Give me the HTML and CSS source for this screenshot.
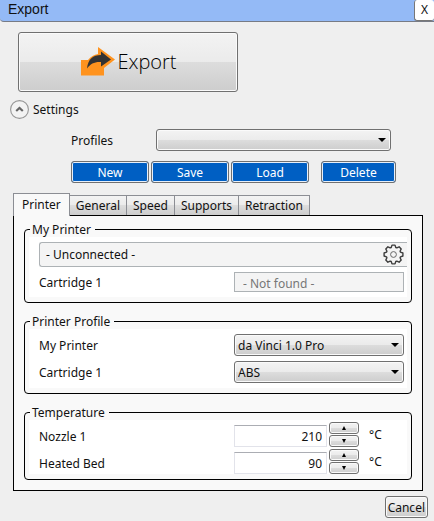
FILE: index.html
```html
<!DOCTYPE html>
<html lang="en">
<head>
<meta charset="utf-8">
<meta name="viewport" content="width=device-width, initial-scale=1">
<title>Export</title>
<link rel="stylesheet" href="styles.css">
</head>
<body>
<header class="titlebar">
  <h1 class="title">Export</h1>
  <button class="close" type="button">X</button>
</header>
<main class="content">
  <button class="export" type="button">
    <svg class="export-icon" width="34" height="32" viewBox="0 0 34 32" aria-hidden="true">
      <path d="M0 14H7Q11 9 17 8V1L34 13.500 23 22V29.500H0Z" fill="#ff931e"/>
      <path d="M6 22.500C7 13 12 9 20 9V5.500L30 13.500 20 20.500V16C14 15.500 9.500 17.500 6 22.500Z" fill="#333"/>
    </svg>
    <span>Export</span>
  </button>
  <button class="settings" type="button">
    <svg width="19" height="19" viewBox="0 0 19 19" aria-hidden="true">
      <circle cx="9.500" cy="9.500" r="8.900" fill="#f3f3f3" stroke="#969696" stroke-width="1.100"/>
      <path d="M6.200 11 9.500 8 12.800 11" fill="none" stroke="#666" stroke-width="2.200"/>
    </svg>
    <span>Settings</span>
  </button>
  <section class="profiles">
    <div class="profile-row">
      <label for="profile">Profiles</label>
      <span class="select"><select id="profile"><option></option></select></span>
    </div>
    <div class="profile-actions">
      <button class="action" type="button">New</button>
      <button class="action" type="button">Save</button>
      <button class="action" type="button">Load</button>
      <button class="action delete" type="button">Delete</button>
    </div>
  </section>
  <div class="tabs" role="tablist">
    <button class="tab active" type="button" role="tab" aria-selected="true">Printer</button>
    <button class="tab" type="button" role="tab">General</button>
    <button class="tab" type="button" role="tab">Speed</button>
    <button class="tab" type="button" role="tab">Supports</button>
    <button class="tab" type="button" role="tab">Retraction</button>
  </div>
  <div class="panel" role="tabpanel">
    <fieldset class="group">
      <legend>My Printer</legend>
      <div class="rows">
        <div class="connection">
          <span>- Unconnected -</span>
          <button class="gear" type="button">
            <svg width="21" height="21" viewBox="-10.500 -10.500 21 21" fill="none" stroke="#3c3c3c" stroke-width="1.400" stroke-linejoin="round" aria-hidden="true">
              <path d="M-2.300-7-1.500-9.400H1.500L2.300-7 3.300-6.600 5.600-7.700 7.700-5.600 6.600-3.300 7-2.300 9.400-1.500V1.500L7 2.300 6.600 3.300 7.700 5.600 5.600 7.700 3.300 6.600 2.300 7 1.500 9.400H-1.500L-2.300 7-3.300 6.600-5.600 7.700-7.700 5.600-6.600 3.300-7 2.300-9.400 1.500V-1.500L-7-2.300-6.600-3.300-7.700-5.600-5.600-7.700-3.300-6.600Z"/>
              <circle r="2.900" stroke="#666" stroke-width="1"/>
            </svg>
          </button>
        </div>
        <div class="row">
          <label for="status">Cartridge 1</label>
          <input class="status" id="status" type="text" value="- Not found -" disabled>
        </div>
      </div>
    </fieldset>
    <fieldset class="group">
      <legend>Printer Profile</legend>
      <div class="rows">
        <div class="row">
          <label for="printer">My Printer</label>
          <span class="select"><select id="printer"><option>da Vinci 1.0 Pro</option></select></span>
        </div>
        <div class="row">
          <label for="material">Cartridge 1</label>
          <span class="select"><select id="material"><option>ABS</option></select></span>
        </div>
      </div>
    </fieldset>
    <fieldset class="group">
      <legend>Temperature</legend>
      <div class="rows temperatures">
        <div class="row">
          <label for="nozzle">Nozzle 1</label>
          <div class="stepper">
            <input class="number" id="nozzle" type="text" inputmode="numeric" value="210">
            <span class="spins"><button class="spin up" type="button"></button><button class="spin down" type="button"></button></span>
            <span class="unit">°C</span>
          </div>
        </div>
        <div class="row">
          <label for="bed">Heated Bed</label>
          <div class="stepper">
            <input class="number" id="bed" type="text" inputmode="numeric" value="90">
            <span class="spins"><button class="spin up" type="button"></button><button class="spin down" type="button"></button></span>
            <span class="unit">°C</span>
          </div>
        </div>
      </div>
    </fieldset>
  </div>
</main>
<footer class="footer"><button class="cancel" type="button">Cancel</button></footer>
</body>
</html>
```
FILE: styles.css
```css
* { box-sizing: border-box; }

body {
  margin: 0;
  background: #efefef;
  color: #111;
  font: 12px/16px "Noto Sans", "Open Sans", sans-serif;
}

button, input, select {
  margin: 0;
  padding: 0;
  font: inherit;
  color: inherit;
}

.titlebar {
  display: flex;
  justify-content: space-between;
  height: 22px;
  padding-left: 8px;
  background: #94baf6;
  border-bottom: 1px solid #777b85;
  border-bottom-left-radius: 4px;
}

.title {
  margin: 0;
  font: 14px/18px "Liberation Sans", sans-serif;
}

.close {
  width: 20px;
  height: 21px;
  background: #fff;
  border: 1px solid #777;
  border-width: 0 0 1px 1px;
  border-radius: 3px;
}

.content { padding: 10px 11px 0 13px; }

.export, .select select, .spin, .cancel {
  background: linear-gradient(#f3f3f3, #ebebeb 50%, #dddddd 50%, #cdcdcd);
  border: 1px solid #707070;
  border-radius: 3px;
  box-shadow: inset 0 0 0 1px #fafafa;
}

.export {
  display: flex;
  align-items: center;
  justify-content: center;
  gap: 2px;
  width: 220px;
  height: 60px;
  margin-left: 5px;
  padding-left: 2px;
  font-family: "Open Sans", "Noto Sans", sans-serif;
  font-weight: 300;
  font-size: 20px;
  line-height: 28px;
  color: #000;
}

.settings {
  display: flex;
  align-items: center;
  gap: 4px;
  margin: 7px 0 0 -3px;
  height: 20px;
  border: 0;
  background: none;
}

.settings span, label { padding-top: 2px; }

.profiles { margin: 10px 27px 0 58px; }

.profile-row {
  display: grid;
  grid-template-columns: 85px 1fr;
  align-items: center;
  margin-right: 5px;
}

.select {
  position: relative;
  display: block;
}

.select select {
  display: block;
  width: 100%;
  height: 22px;
  padding: 2px 0 0 3px;
  appearance: none;
}

.select::after {
  content: "";
  position: absolute;
  top: 9px;
  right: 5px;
  border: 4px solid transparent;
  border-top-color: #000;
  border-bottom: 0;
  pointer-events: none;
}

.profile-actions {
  display: grid;
  grid-template-columns: 78fr 78fr 78fr 85fr;
  gap: 2px;
  margin-top: 10px;
}

.action {
  height: 22px;
  padding-top: 2px;
  background: #005fc3;
  color: #fff;
  border: 1px solid #707070;
  border-radius: 3px;
  box-shadow: inset 0 0 0 1px #e8f0fa;
}

.delete { margin-left: 10px; }

.tabs {
  display: flex;
  align-items: flex-end;
  margin-top: 10px;
}

.tab {
  height: 20px;
  padding: 0 6px;
  border: 1px solid #8c8e94;
  border-width: 1px 1px 0 0;
  background: linear-gradient(#f3f3f3, #ebebeb 50%, #dddddd 50%, #cdcdcd);
}

.tab.active {
  position: relative;
  height: 23px;
  margin-bottom: -1px;
  padding: 0 8px;
  border-left-width: 1px;
  background: #f9f9f9;
}

.panel {
  display: grid;
  gap: 11px;
  padding: 6px 10px 10px;
  background: #f9f9f9;
  border: 1px solid #000;
}

.group {
  min-width: 0;
  margin: 0;
  padding: 0 4px 5px;
  border: 1px solid #000;
  border-radius: 4px;
}

.group legend {
  height: 15px;
  margin-left: 1px;
  padding: 0 4px 0 2px;
  line-height: 15px;
}

.rows {
  display: grid;
  gap: 5px;
  padding: 5px 3px 5px 10px;
  background: #fff;
}

.row {
  display: grid;
  grid-template-columns: 195px 1fr;
  align-items: center;
}

.connection {
  display: flex;
  align-items: center;
  justify-content: space-between;
  height: 25px;
  margin-right: -3px;
  padding: 0 3px 0 6px;
  background: #f4f4f4;
  border: 1px solid #adb2b5;
  border-right: 0;
  border-radius: 3px 0 0 3px;
}

.gear {
  display: flex;
  border: 0;
  background: none;
}

.status {
  width: 100%;
  height: 20px;
  padding: 2px 8px 0;
  background: #f4f4f4;
  border: 1px solid #adb2b5;
  color: #777;
}

.temperatures {
  gap: 2px;
  padding-top: 2px;
  padding-bottom: 0;
}

.temperatures label { padding-top: 4px; }

.stepper {
  display: grid;
  grid-template-columns: 1fr 30px 43px;
  gap: 2px;
  align-items: end;
}

.number {
  width: 100%;
  height: 22px;
  padding-right: 4px;
  background: #fff;
  border: 1px solid #e2e3ea;
  border-top-color: #abadb3;
  text-align: right;
}

.spins {
  display: grid;
  gap: 1px;
}

.spin {
  display: flex;
  align-items: center;
  justify-content: center;
  height: 12px;
}

.spin::before {
  content: "";
  border: 2px solid transparent;
}

.up::before {
  border-bottom: 4px solid #000;
  border-top: 0;
}

.down::before {
  border-top: 4px solid #000;
  border-bottom: 0;
}

.unit {
  align-self: center;
  padding-left: 8px;
}

.footer {
  display: flex;
  justify-content: flex-end;
  padding: 5px 6px 3px;
}

.cancel {
  height: 22px;
  padding: 2px 2px 0;
}
```
